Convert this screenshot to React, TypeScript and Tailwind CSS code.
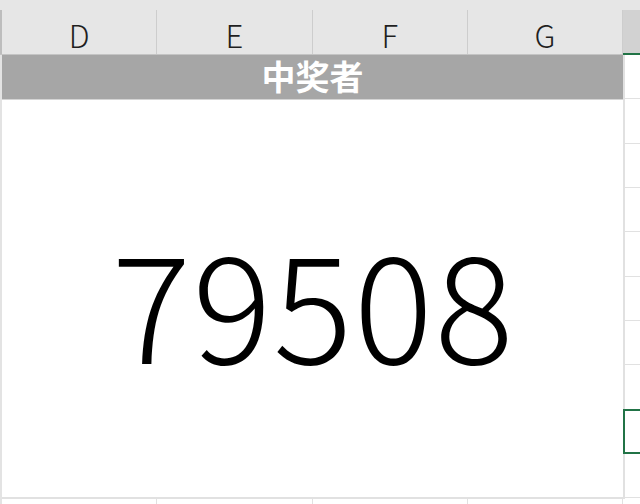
import React from "react";

const COLS = ["D", "E", "F", "G"];
const H_ROWS = 9;

export default function App() {
    return (
        <div
            className="w-[640px] h-[504px] bg-white overflow-hidden flex flex-col"
            style={{ fontFamily: '"Noto Sans CJK JP", "Noto Sans CJK SC", "Noto Sans", sans-serif' }}
        >
            {/* top strip of the ribbon area */}
            <div className="h-[10px] shrink-0 bg-[#e6e6e6]" />

            {/* column headers */}
            <div className="h-[45px] shrink-0 flex bg-[#e6e6e6] border-b border-[#c4c4c4]">
                <div className="w-[2px] shrink-0 bg-[#bdbdbd]" />
                {COLS.map((c) => (
                    <div
                        key={c}
                        className="w-[155.25px] shrink-0 border-r border-[#cdcdcd] flex items-center justify-center pt-[5px] text-[31px] font-light text-[#1f1f1f] leading-none"
                    >
                        {c}
                    </div>
                ))}
                <div className="flex-1 bg-[#d2d2d2] border-b-2 border-[#217346] -mb-px" />
            </div>

            {/* body */}
            <div className="flex h-[444px] shrink-0">
                <div className="w-[2px] shrink-0 bg-[#e3e3e3]" />

                {/* merged D:G block */}
                <div className="w-[621px] shrink-0 flex flex-col border-b-2 border-[#e1e1e1]">
                    <div
                        className="h-[45px] shrink-0 bg-[#a6a6a6] border-b border-[#d4d4d4] flex items-center justify-center text-white text-[34px] font-bold leading-none pb-[2px]"
                        style={{ fontFamily: '"Noto Sans CJK SC", "Noto Sans CJK JP", sans-serif' }}
                    >
                        中奖者
                    </div>
                    <div className="flex-1 flex justify-center pt-[126px]">
                        <span className="text-[148px] font-light leading-none text-black tracking-[1.5px] pl-[2px]">
                            79508
                        </span>
                    </div>
                </div>

                {/* column H */}
                <div className="flex-1 flex flex-col border-l-2 border-[#e1e1e1]">
                    {Array.from({ length: H_ROWS + 1 }).map((_, i) =>
                        i === 8 ? (
                            <div
                                key={i}
                                className="h-[45px] shrink-0 -ml-[2px] -mt-px border-2 border-r-0 border-[#217346]"
                            />
                        ) : (
                            <div key={i} className="h-[44.35px] shrink-0 border-b border-[#e1e1e1]" />
                        )
                    )}
                </div>
            </div>

            {/* next row */}
            <div className="flex flex-1">
                <div className="w-[2px] shrink-0 bg-[#e3e3e3]" />
                {COLS.map((c) => (
                    <div key={c} className="w-[155.25px] shrink-0 border-r border-[#e1e1e1]" />
                ))}
                <div className="flex-1" />
            </div>
        </div>
    );
}
